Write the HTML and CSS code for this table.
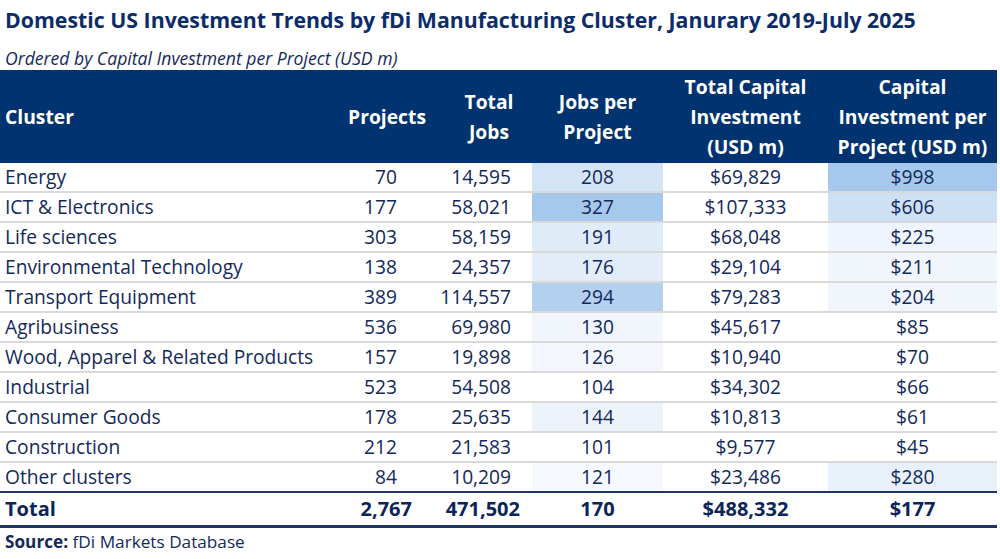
FILE: index.html
```html
<!DOCTYPE html>
<html>
<head>
<meta charset="utf-8">
<link rel="stylesheet" href="styles.css">
</head>
<body>
<div class="page">
  <h1 class="title">Domestic US Investment Trends by fDi Manufacturing Cluster, Janurary 2019-July 2025</h1>
  <p class="subtitle">Ordered by Capital Investment per Project (USD m)</p>
  <table class="data">
    <colgroup>
      <col class="c-cluster"><col class="c-proj"><col class="c-jobs"><col class="c-jpp"><col class="c-tci"><col class="c-cipp">
    </colgroup>
    <thead>
      <tr>
        <th class="left">Cluster</th>
        <th class="hproj">Projects</th>
        <th class="hjobs">Total<br>Jobs</th>
        <th>Jobs per<br>Project</th>
        <th>Total Capital<br>Investment<br>(USD m)</th>
        <th>Capital<br>Investment per<br>Project (USD m)</th>
      </tr>
    </thead>
    <tbody>
      <tr><td class="left">Energy</td><td class="proj">70</td><td class="jobs">14,595</td><td class="mid" style="background-color:#d3e4f6">208</td><td class="mid">$69,829</td><td class="mid" style="background-color:#a6c8ec">$998</td></tr>
      <tr><td class="left">ICT &amp; Electronics</td><td class="proj">177</td><td class="jobs">58,021</td><td class="mid" style="background-color:#a6c8ec">327</td><td class="mid">$107,333</td><td class="mid" style="background-color:#cee0f4">$606</td></tr>
      <tr><td class="left">Life sciences</td><td class="proj">303</td><td class="jobs">58,159</td><td class="mid" style="background-color:#e0ebf8">191</td><td class="mid">$68,048</td><td class="mid" style="background-color:#eff5fc">$225</td></tr>
      <tr><td class="left">Environmental Technology</td><td class="proj">138</td><td class="jobs">24,357</td><td class="mid" style="background-color:#e3edf9">176</td><td class="mid">$29,104</td><td class="mid" style="background-color:#f1f6fc">$211</td></tr>
      <tr><td class="left">Transport Equipment</td><td class="proj">389</td><td class="jobs">114,557</td><td class="mid" style="background-color:#b3d0ef">294</td><td class="mid">$79,283</td><td class="mid" style="background-color:#f1f6fc">$204</td></tr>
      <tr><td class="left">Agribusiness</td><td class="proj">536</td><td class="jobs">69,980</td><td class="mid" style="background-color:#f1f6fc">130</td><td class="mid">$45,617</td><td class="mid">$85</td></tr>
      <tr><td class="left">Wood, Apparel &amp; Related Products</td><td class="proj">157</td><td class="jobs">19,898</td><td class="mid" style="background-color:#f3f7fd">126</td><td class="mid">$10,940</td><td class="mid">$70</td></tr>
      <tr><td class="left">Industrial</td><td class="proj">523</td><td class="jobs">54,508</td><td class="mid">104</td><td class="mid">$34,302</td><td class="mid">$66</td></tr>
      <tr><td class="left">Consumer Goods</td><td class="proj">178</td><td class="jobs">25,635</td><td class="mid" style="background-color:#edf3fb">144</td><td class="mid">$10,813</td><td class="mid">$61</td></tr>
      <tr><td class="left">Construction</td><td class="proj">212</td><td class="jobs">21,583</td><td class="mid">101</td><td class="mid">$9,577</td><td class="mid">$45</td></tr>
      <tr class="last"><td class="left">Other clusters</td><td class="proj">84</td><td class="jobs">10,209</td><td class="mid" style="background-color:#f5f8fd">121</td><td class="mid">$23,486</td><td class="mid" style="background-color:#e8f0fa">$280</td></tr>
    </tbody>
    <tfoot>
      <tr><td class="left">Total</td><td class="proj">2,767</td><td class="jobs">471,502</td><td class="mid">170</td><td class="mid">$488,332</td><td class="mid">$177</td></tr>
    </tfoot>
  </table>
  <p class="source"><b>Source:</b> fDi Markets Database</p>
</div>
</body>
</html>
```
FILE: styles.css
```css
html, body {
  margin: 0;
  padding: 0;
  background: #ffffff;
}
body {
  font-family: "Open Sans", "Noto Sans", sans-serif;
  color: #13295a;
}
.page {
  width: 1000px;
  height: 559px;
  overflow: hidden;
}
.title {
  margin: 0;
  padding: 5px 0 0 5px;
  font-size: 21.3px;
  line-height: 30px;
  font-weight: 700;
  color: #0b2c69;
  white-space: nowrap;
}
.subtitle {
  margin: 0;
  padding: 11px 0 0 5px;
  font-size: 17.6px;
  line-height: 24px;
  font-style: italic;
  color: #13295a;
}
.data {
  width: 997px;
  table-layout: fixed;
  border-collapse: collapse;
  border-spacing: 0;
}
.c-cluster { width: 335px; }
.c-proj { width: 105px; }
.c-jobs { width: 92px; }
.c-jpp { width: 131px; }
.c-tci { width: 165px; }
.c-cipp { width: 169px; }
.data thead th {
  background: #00336f;
  color: #ffffff;
  font-weight: 700;
  font-size: 19.3px;
  line-height: 30px;
  height: 93px;
  padding: 0;
  text-align: center;
  vertical-align: middle;
  white-space: nowrap;
}
.data thead th.left {
  text-align: left;
  padding-left: 5px;
}
.data thead th.hproj { text-align: right; padding-right: 14px; }
.data thead th.hjobs { padding-left: 6px; }
.data td {
  font-size: 19.2px;
  line-height: 28px;
  height: 28px;
  padding: 0;
  border-bottom: 2px solid #d9d9d9;
  background-clip: padding-box;
  white-space: nowrap;
}
.data td.left { padding-left: 5px; }
.data td.proj { text-align: right; padding-right: 43px; }
.data td.jobs { text-align: right; padding-right: 21px; }
.data td.mid { text-align: center; }
.data tbody tr.last td { border-bottom: 2px solid #1c3766; }
.data tfoot td {
  font-weight: 700;
  font-size: 20px;
  color: #0b2459;
  border-bottom: 3px solid #1c3766;
  line-height: 32px;
  height: 32px;
  box-shadow: 0 1px 0 #c6d4e8;
}
.data tfoot td.proj { padding-right: 28px; }
.data tfoot td.jobs { padding-right: 12px; }
.source {
  margin: 0;
  padding: 3px 0 0 5px;
  font-size: 17.2px;
  line-height: 22px;
  color: #13295a;
}
.source b { font-weight: 700; }
```
